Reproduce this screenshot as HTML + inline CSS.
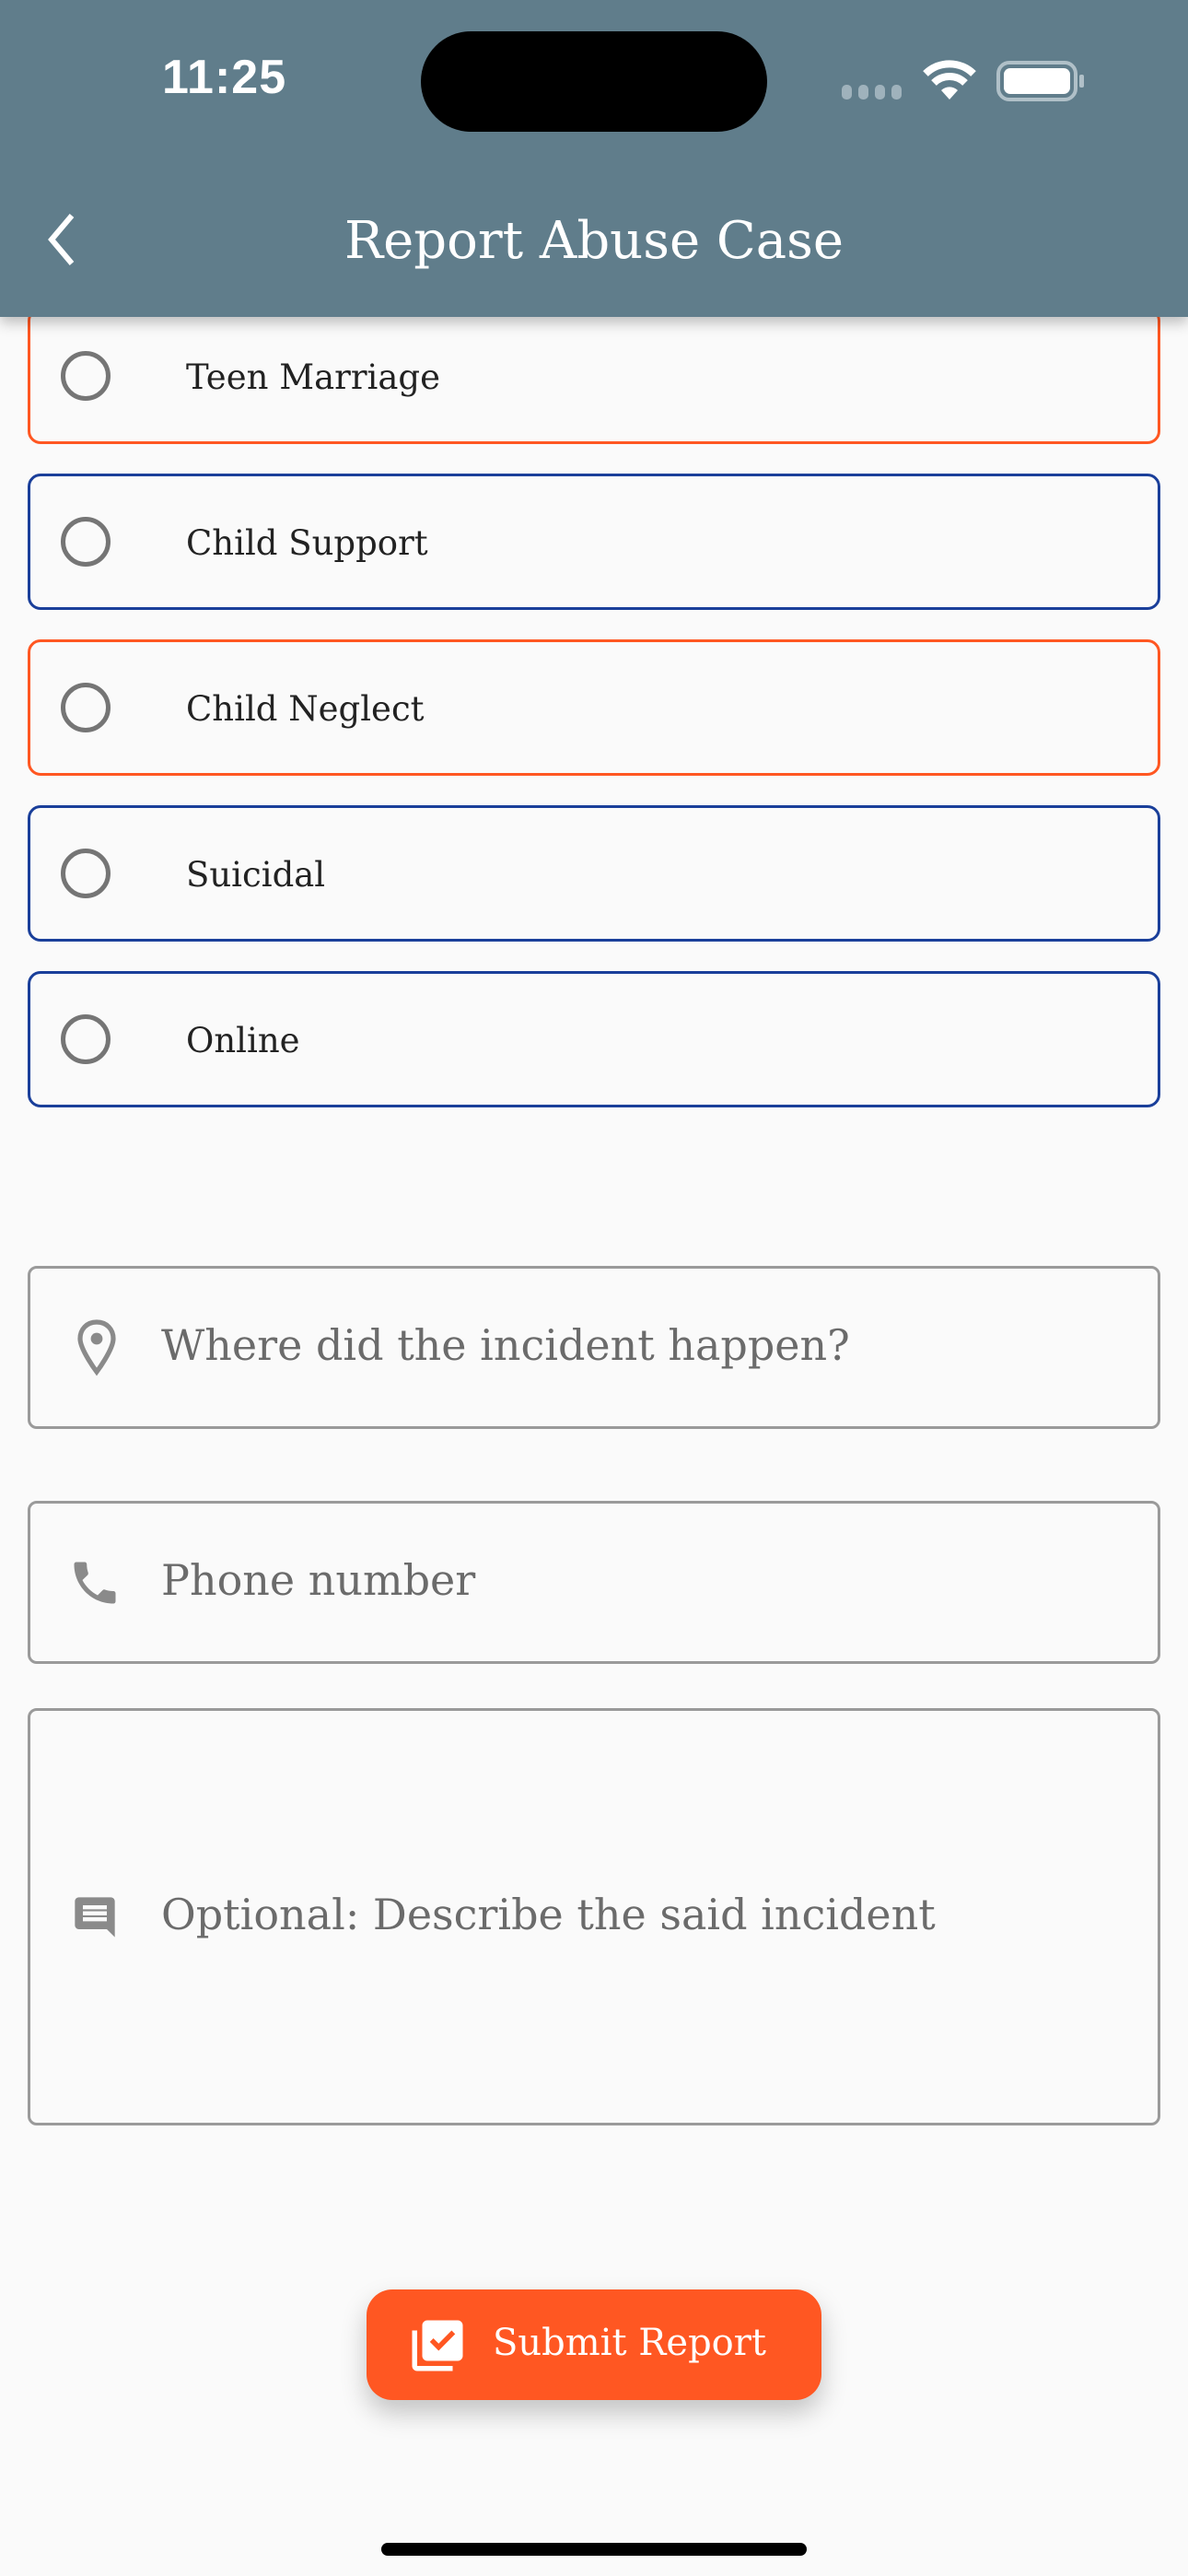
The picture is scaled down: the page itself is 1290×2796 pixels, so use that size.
<!DOCTYPE html>
<html><head><meta charset="utf-8"><style>
*{box-sizing:border-box;margin:0;padding:0}
body{width:1290px;height:2796px;background:#fafafa;position:relative;overflow:hidden;font-family:"DejaVu Serif","Liberation Serif",serif}
.hdr{position:absolute;left:0;top:0;width:1290px;height:344px;background:#607d8b;box-shadow:0 6px 14px rgba(0,0,0,.25);z-index:5}
.time{position:absolute;left:176px;top:54px;font:600 52px "Liberation Sans",sans-serif;color:#fff;letter-spacing:1px}
.island{position:absolute;left:457px;top:34px;width:376px;height:109px;border-radius:55px;background:#000}
.title{position:absolute;left:0;width:1290px;top:222px;text-align:center;color:#fff;font-size:56px;line-height:80px}
.card{position:absolute;left:30px;width:1230px;height:148px;border-radius:14px;border:3px solid #ff5722;background:#fafafa}
.card.b{border-color:#1a3f9a}
.card .r{position:absolute;left:33px;top:44px;width:54px;height:54px;border-radius:50%;border:5px solid #757575}
.card span{position:absolute;left:169px;top:48px;font-size:37px;line-height:50px;color:#222}
.fld{position:absolute;left:30px;width:1230px;border:3px solid #9a9a9a;border-radius:10px}
.fld span{position:absolute;left:142px;font-size:46px;color:#6b6b6b;line-height:60px;transform:translateY(-50%)}
.fld svg{position:absolute;transform:translateY(-50%)}
.btn{position:absolute;left:398px;top:2485px;width:494px;height:120px;border-radius:28px;background:#ff5722;box-shadow:0 14px 28px rgba(0,0,0,.22)}
.btn span{position:absolute;left:137px;top:30px;font-size:40px;line-height:56px;color:#fff}
</style></head><body>
<div class="hdr">
<div class="time">11:25</div>
<div class="island"></div>
<svg style="position:absolute;left:912px;top:90px" width="72" height="20"><g fill="#9fb2bc"><rect x="2" y="2" width="11" height="16" rx="5"/><rect x="20" y="2" width="11" height="16" rx="5"/><rect x="38" y="2" width="11" height="16" rx="5"/><rect x="56" y="2" width="11" height="16" rx="5"/></g></svg>
<svg style="position:absolute;left:1000px;top:64px" width="62" height="46" viewBox="0 0 62 46"><path d="M31 44 L22 34 A13 13 0 0 1 40 34 Z" fill="#fff"/><path d="M14 26 A24 24 0 0 1 48 26" stroke="#fff" stroke-width="8" fill="none"/><path d="M5 16 A37 37 0 0 1 57 16" stroke="#fff" stroke-width="8" fill="none"/></svg>
<svg style="position:absolute;left:1082px;top:66px" width="98" height="44"><rect x="2" y="2" width="84" height="40" rx="12" fill="none" stroke="#b0c0c8" stroke-width="4"/><rect x="8" y="8" width="72" height="28" rx="7" fill="#fff"/><rect x="90" y="15" width="5" height="14" rx="2" fill="#b0c0c8"/></svg>
<svg style="position:absolute;left:44px;top:228px" width="44" height="64"><path d="M34 6 L12 32 L34 58" stroke="#fff" stroke-width="6" fill="none"/></svg>
<div class="title">Report Abuse Case</div>
</div>

<div class="card" style="top:334px"><div class="r"></div><span>Teen Marriage</span></div>
<div class="card b" style="top:514px"><div class="r"></div><span>Child Support</span></div>
<div class="card" style="top:694px"><div class="r"></div><span>Child Neglect</span></div>
<div class="card b" style="top:874px"><div class="r"></div><span>Suicidal</span></div>
<div class="card b" style="top:1054px"><div class="r"></div><span>Online</span></div>

<div class="fld" style="top:1374px;height:177px">
<svg style="left:48px;top:86px" width="48" height="64" viewBox="0 0 24 32"><path d="M12 2C6.5 2 3 6 3 11c0 6 9 18 9 18s9-12 9-18c0-5-3.5-9-9-9z" fill="none" stroke="#8a8a8a" stroke-width="2.6"/><circle cx="12" cy="11" r="3.2" fill="#8a8a8a"/></svg>
<span style="top:83px">Where did the incident happen?</span></div>

<div class="fld" style="top:1629px;height:177px">
<svg style="left:40px;top:86px" width="60" height="60" viewBox="0 0 24 24"><path d="M6.6 10.8c1.4 2.8 3.8 5.1 6.6 6.6l2.2-2.2c.3-.3.7-.4 1-.2 1.1.4 2.3.6 3.6.6.6 0 1 .4 1 1V20c0 .6-.4 1-1 1C10.6 21 3 13.4 3 4c0-.6.4-1 1-1h3.5c.6 0 1 .4 1 1 0 1.3.2 2.5.6 3.6.1.3 0 .7-.2 1L6.6 10.8z" fill="#8a8a8a"/></svg>
<span style="top:83px">Phone number</span></div>

<div class="fld" style="top:1854px;height:453px">
<svg style="left:44px;top:224px" width="52" height="52" viewBox="0 0 24 24"><path d="M21.99 4c0-1.1-.89-2-1.99-2H4c-1.1 0-2 .9-2 2v12c0 1.1.9 2 2 2h14l4 4-.01-18zM18 14H6v-2h12v2zm0-3H6V9h12v2zm0-3H6V6h12v2z" fill="#8a8a8a"/></svg>
<span style="top:221px">Optional: Describe the said incident</span></div>

<div class="btn">
<svg style="position:absolute;left:44px;top:28px" width="66" height="66" viewBox="0 0 24 24"><path d="M20 2H8c-1.1 0-2 .9-2 2v12c0 1.1.9 2 2 2h12c1.1 0 2-.9 2-2V4c0-1.1-.9-2-2-2zm-7.530 12L9 10.5l1.4-1.41 2.07 2.08L17.6 6 19 7.41 12.47 14zM4 6H2v14c0 1.1.9 2 2 2h14v-2H4V6z" fill="#fff"/></svg>
<span>Submit Report</span></div>

<div style="position:absolute;left:414px;top:2760px;width:462px;height:14px;border-radius:7px;background:#000"></div>
</body></html>
